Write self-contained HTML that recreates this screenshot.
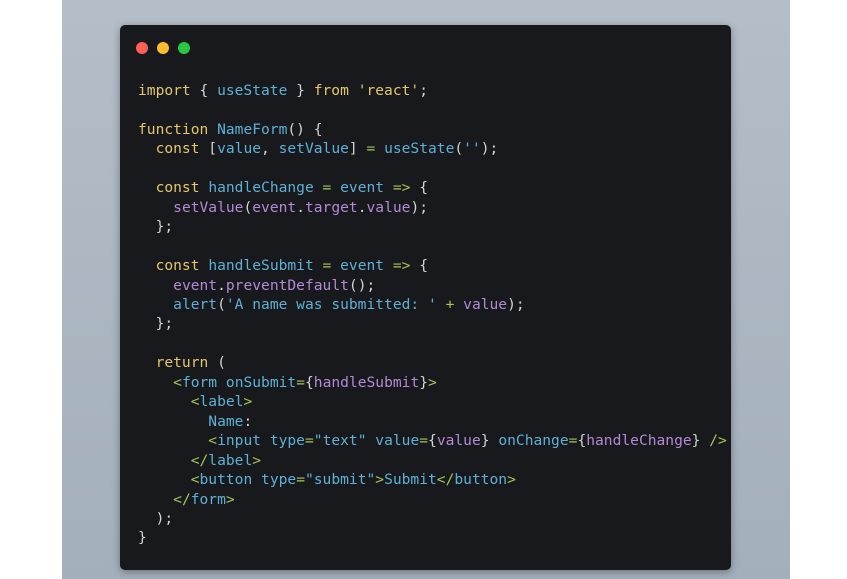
<html><head><style>
body{margin:0;width:847px;height:579px;background:#fff;position:relative;overflow:hidden}
#bg{position:absolute;left:62px;top:0;width:728px;height:579px;background:linear-gradient(#b4bec8,#a3afbb)}
#win{position:absolute;left:120px;top:25px;width:611px;height:545px;background:#17191c;border-radius:5px;box-shadow:0 2px 8px rgba(0,0,0,.35)}
.d{position:absolute;top:17px;width:12px;height:12px;border-radius:50%}
pre{position:absolute;left:18px;top:56px;margin:0;font:14.6px/19.45px "DejaVu Sans Mono","Liberation Mono",monospace;color:#d4d4d4}
.k{color:#e5c76b}.b{color:#5fb0d6}.p{color:#b48ad6}.g{color:#a6c657}
</style></head><body><div id="bg"></div><div id="win">
<div class="d" style="left:16px;background:#fe5f57"></div><div class="d" style="left:37px;background:#febc2e"></div><div class="d" style="left:58px;background:#28c840"></div>
<pre><span class="k">import</span> { <span class="b">useState</span> } <span class="k">from</span> <span class="k">'react'</span>;

<span class="k">function</span> <span class="b">NameForm</span>() {
  <span class="k">const</span> [<span class="b">value</span>, <span class="b">setValue</span>] <span class="g">=</span> <span class="b">useState</span>(<span class="b">''</span>);

  <span class="k">const</span> <span class="b">handleChange</span> <span class="g">=</span> <span class="b">event</span> <span class="g">=&gt;</span> {
    <span class="p">setValue</span>(<span class="p">event</span>.<span class="p">target</span>.<span class="p">value</span>);
  };

  <span class="k">const</span> <span class="b">handleSubmit</span> <span class="g">=</span> <span class="b">event</span> <span class="g">=&gt;</span> {
    <span class="p">event</span>.<span class="p">preventDefault</span>();
    <span class="b">alert</span>(<span class="b">'A name was submitted: '</span> <span class="g">+</span> <span class="p">value</span>);
  };

  <span class="k">return</span> (
    <span class="g">&lt;</span><span class="b">form</span> <span class="b">onSubmit</span><span class="g">=</span>{<span class="p">handleSubmit</span>}<span class="g">&gt;</span>
      <span class="g">&lt;</span><span class="b">label</span><span class="g">&gt;</span>
        <span class="b">Name</span>:
        <span class="g">&lt;</span><span class="b">input</span> <span class="b">type</span><span class="g">=</span><span class="b">"text"</span> <span class="b">value</span><span class="g">=</span>{<span class="p">value</span>} <span class="b">onChange</span><span class="g">=</span>{<span class="p">handleChange</span>} <span class="g">/&gt;</span>
      <span class="g">&lt;/</span><span class="b">label</span><span class="g">&gt;</span>
      <span class="g">&lt;</span><span class="b">button</span> <span class="b">type</span><span class="g">=</span><span class="b">"submit"</span><span class="g">&gt;</span><span class="b">Submit</span><span class="g">&lt;/</span><span class="b">button</span><span class="g">&gt;</span>
    <span class="g">&lt;/</span><span class="b">form</span><span class="g">&gt;</span>
  );
}</pre></div></body></html>
